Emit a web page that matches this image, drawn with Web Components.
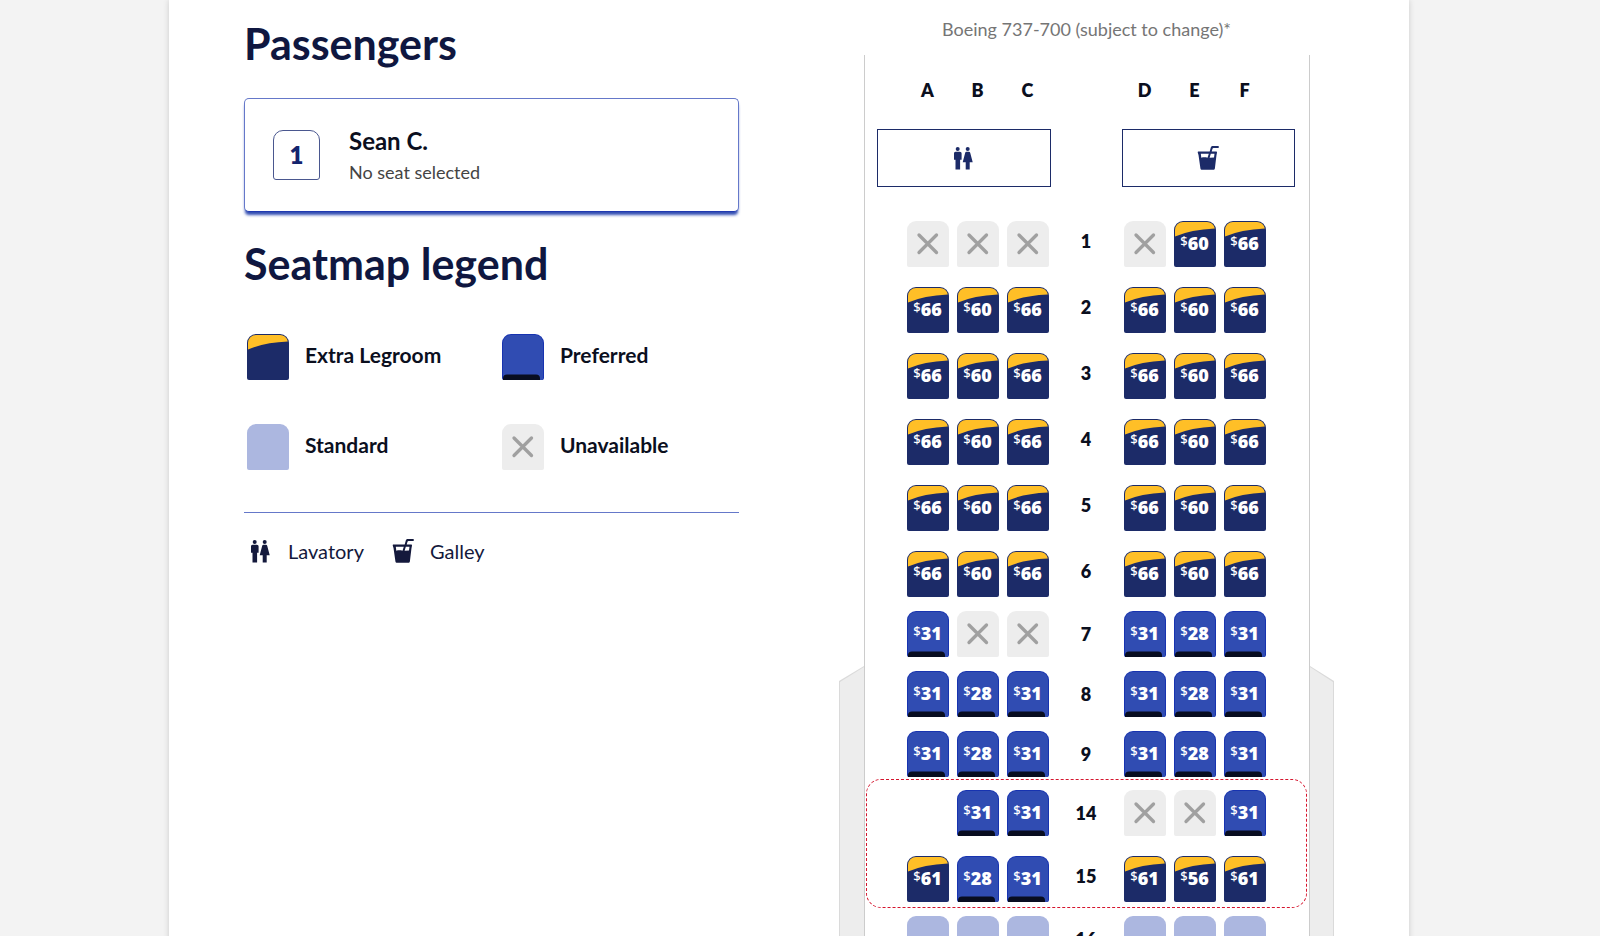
<!DOCTYPE html>
<html lang="en">
<head>
<meta charset="utf-8">
<meta name="viewport" content="width=device-width, initial-scale=1">
<title>Select your seats</title>
<style>
html { background: #f3f3f3; }
body { margin: 0; padding-right: 22px; font-family: Lato, "Noto Sans", sans-serif; color: #0b0f1e; }
</style>
</head>
<body>
<seat-page>
  <section slot="side" aria-label="Passengers and legend">
    <page-heading>Passengers</page-heading>
    <passenger-card number="1" name="Sean C.">No seat selected</passenger-card>
    <page-heading>Seatmap legend</page-heading>
    <seat-legend></seat-legend>
  </section>
  <seat-map slot="map" caption="Boeing 737-700 (subject to change)*"></seat-map>
</seat-page>
<script>
const define = (name, html, setup) => {
  const template = document.createElement('template');
  template.innerHTML = html;
  customElements.define(name, class extends HTMLElement {
    constructor() {
      super();
      this.attachShadow({ mode: 'open' });
    }
    connectedCallback() {
      if (this.shadowRoot.childNodes.length) return;
      this.shadowRoot.append(template.content.cloneNode(true));
      if (setup) setup(this, this.shadowRoot);
    }
  });
};

define('seat-page', `
<style>
:host { display: block; }
main { box-sizing: border-box; max-width: 1240px; min-height: 100vh; margin: 0 auto; padding: 16px 75px 0; background: #fff;
  box-shadow: 0 0 6px rgba(0,0,0,.16); display: grid; grid-template-columns: minmax(0,1fr) minmax(0,1fr); gap: 100px; }
</style>
<main><slot name="side"></slot><slot name="map"></slot></main>`);

define('page-heading', `
<style>
:host { display: block; }
h2 { margin: 0; padding-top: 2px; font-size: 43px; line-height: 52px; font-weight: 700; color: #0f1740; }
</style>
<h2><slot></slot></h2>`);

define('passenger-card', `
<style>
:host { display: block; margin: 28px 0 24px; }
button { box-sizing: border-box; width: 100%; height: 114px; padding: 0 28px; display: flex; align-items: center; gap: 29px;
  font: inherit; text-align: left; background: #fff; border: 1px solid #6578c9; border-bottom: 1px solid #2039b0; border-radius: 5px;
  box-shadow: 0 4px 3px -1px #304cb2; }
.badge { box-sizing: border-box; width: 47px; height: 50px; border: 1px solid #4a578f; border-radius: 10px 10px 3px 3px;
  font-size: 24px; line-height: 48px; font-weight: 800; text-align: center; color: #14246e; }
.who { padding-top: 2px; }
strong { display: block; font-size: 24px; line-height: 32px; color: #0b0f1e; }
.note { display: block; font-size: 18px; line-height: 30px; color: #444; }
</style>
<button type="button"><span class="badge"></span><span class="who"><strong></strong><span class="note"><slot></slot></span></span></button>`,
(host, root) => {
  root.querySelector('.badge').textContent = host.getAttribute('number');
  root.querySelector('strong').textContent = host.getAttribute('name');
});

const ICONS = {
  lavatory: `<circle cx="4.700" cy="4" r="2"/><path d="M2.600 6.800h4.300c1 0 1.700.7 1.700 1.700v6.200H7.100V24.500H2.500V14.700H1V8.500c0-1 .6-1.700 1.600-1.700z"/><circle cx="14.700" cy="4" r="2"/><path d="M13.400 6.800h2.600c.6 0 1 .3 1.200.9l2.500 9.500h-3v7.300h-4v-7.300H9.700l2.500-9.500c.2-.6.6-.9 1.200-.9z"/>`,
  galley: `<path fill-rule="evenodd" d="M1.500 6.500h11.200l1.100-4c.3-1 .9-1.500 1.900-1.500h6v2h-5.200c-.5 0-.8.2-1 .7l-.8 2.800h4.300c.7 0 1.100.5 1 1.200l-.5 2.300-1.600 13.200c-.1 1-.8 1.600-1.700 1.600H5.100c-.9 0-1.600-.6-1.700-1.600L1.500 10 .8 7.700c-.2-.7.1-1.200.7-1.200zM3.800 8.700l.5 4c2.200-.5 4.300-.4 6.200 0l1.300-4zM13.800 8.700l-1.200 4.100 4.400-.3.500-3.800z"/>`
};
define('facility-icon', `
<style>
:host { display: inline-block; width: 22px; height: 26px; }
svg { display: block; fill: currentColor; }
</style>
<svg width="22" height="26" viewBox="0 0 22 26" aria-hidden="true"></svg>`,
(host, root) => { root.querySelector('svg').innerHTML = ICONS[host.getAttribute('kind')]; });

const SEATS = {
  extra: `<path d="M0 11V9a9 9 0 0 1 9-9h24a9 9 0 0 1 9 9v35a2 2 0 0 1-2 2H2a2 2 0 0 1-2-2z" fill="#1c2b68"/><path d="M1 15.500V9a8 8 0 0 1 8-8h24a8 8 0 0 1 7.800 6.500Q17 8.500 1 15.500z" fill="#ffbf27"/>`,
  preferred: `<path d="M0 9a9 9 0 0 1 9-9h24a9 9 0 0 1 9 9v35a2 2 0 0 1-2 2H2a2 2 0 0 1-2-2z" fill="#1733b0"/><path d="M1 9a8 8 0 0 1 8-8h24a8 8 0 0 1 8 8v37H1z" fill="#304cb2"/><path d="M1 46v-1.500a4 4 0 0 1 4-4h29a4 4 0 0 1 4 4V46z" fill="#080d20"/>`,
  standard: `<path d="M0 9a9 9 0 0 1 9-9h24a9 9 0 0 1 9 9v35a2 2 0 0 1-2 2H2a2 2 0 0 1-2-2z" fill="#acb7e0"/>`,
  unavailable: `<path d="M0 9a9 9 0 0 1 9-9h24a9 9 0 0 1 9 9v35a2 2 0 0 1-2 2H2a2 2 0 0 1-2-2z" fill="#ededed"/><path d="M12 14l17.500 17.500M29.500 14l-17.500 17.500" stroke="#a0a0a0" stroke-width="3.300" stroke-linecap="round"/>`
};
define('seat-shape', `
<style>
:host { display: grid; width: 42px; height: 46px; }
svg, slot { grid-area: 1 / 1; }
svg { display: block; }
slot { display: flex; align-items: center; justify-content: center; }
</style>
<svg width="42" height="46" viewBox="0 0 42 46" aria-hidden="true"></svg><slot></slot>`,
(host, root) => { root.querySelector('svg').innerHTML = SEATS[host.getAttribute('kind')]; });

define('seat-legend', `
<style>
:host { display: block; }
ul { list-style: none; margin: 0; padding: 0; }
.seats { display: grid; grid-template-columns: 255px 1fr; row-gap: 44px; padding: 44px 3px 42px; border-bottom: 1px solid #6578c9; }
.seats li { display: flex; align-items: center; gap: 16px; font-size: 21px; line-height: 24px; font-weight: 700; }
.seats span { padding-bottom: 4px; }
.facilities { display: flex; gap: 28px; padding: 25px 6px; color: #14193c; }
.facilities li { display: flex; align-items: center; gap: 16px; font-size: 20px; line-height: 26px; }
</style>
<ul class="seats">
  <li><seat-shape kind="extra"></seat-shape><span>Extra Legroom</span></li>
  <li><seat-shape kind="preferred"></seat-shape><span>Preferred</span></li>
  <li><seat-shape kind="standard"></seat-shape><span>Standard</span></li>
  <li><seat-shape kind="unavailable"></seat-shape><span>Unavailable</span></li>
</ul>
<ul class="facilities">
  <li><facility-icon kind="lavatory"></facility-icon><span>Lavatory</span></li>
  <li><facility-icon kind="galley"></facility-icon><span>Galley</span></li>
</ul>`);

define('plane-seat', `
<style>
:host { display: block; }
button { display: block; margin: 0; padding: 0; border: 0; background: none; font: inherit; color: #fff; }
.price { display: flex; align-items: flex-start; font-family: "Noto Sans", Lato, sans-serif; font-size: 18px; line-height: 20px; font-weight: 900; padding-bottom: 2px; }
.price small { font-size: 13px; line-height: 16px; font-weight: 500; }
</style>
<button type="button"><seat-shape></seat-shape></button>`,
(host, root) => {
  const kind = host.getAttribute('kind');
  const price = host.getAttribute('price');
  const button = root.querySelector('button');
  button.disabled = kind === 'unavailable';
  button.setAttribute('aria-label', 'Seat ' + host.getAttribute('place') + (price ? ', $' + price : ', ' + kind));
  const shape = document.createElement('seat-shape');
  shape.setAttribute('kind', kind);
  if (price) shape.innerHTML = '<span class="price"><small>$</small>' + price + '</span>';
  button.replaceChildren(shape);
});

define('seat-row', `
<style>
:host { display: grid; grid-template-columns: 42px 42px 42px 59px 42px 42px 42px; column-gap: 8px; justify-content: center; align-items: center;
  padding: 8px 2px 6px 0; }
:host([legroom]) plane-seat { margin-top: 6px; }
.number { font-size: 18px; line-height: 24px; font-weight: 800; text-align: center; }
</style>`,
(host, root) => {
  const number = host.getAttribute('number');
  const kinds = { e: 'extra', p: 'preferred', s: 'standard', x: 'unavailable' };
  host.getAttribute('seats').split(' ').forEach((code, i) => {
    if (i === 3) {
      const label = document.createElement('div');
      label.className = 'number';
      label.textContent = number;
      root.append(label);
    }
    if (code === '-') { root.append(document.createElement('span')); return; }
    const seat = document.createElement('plane-seat');
    seat.setAttribute('kind', kinds[code[0]]);
    seat.setAttribute('place', number + 'ABCDEF'[i]);
    if (code.length > 1) seat.setAttribute('price', code.slice(1));
    root.append(seat);
  });
});

define('seat-map', `
<style>
:host { display: block; }
.caption { margin: 0 0 13px; font-size: 18px; line-height: 26px; text-align: center; color: #757575; }
.plane { display: grid; grid-template-columns: 25px minmax(0,1fr) 24px; }
.wing { margin-top: 611px; background: #dadada; clip-path: polygon(0 15px, 100% 0, 100% 100%, 0 100%); display: grid; }
.wing::before { content: ""; margin: 1px 0 0 1px; background: #ededed; clip-path: polygon(0 15px, 100% 0, 100% 100%, 0 100%); }
.wing.right { clip-path: polygon(0 0, 100% 15px, 100% 100%, 0 100%); }
.wing.right::before { margin: 1px 1px 0 0; clip-path: polygon(0 0, 100% 15px, 100% 100%, 0 100%); }
.cabin { border: solid #ccc; border-width: 0 1px; }
.letters { display: grid; grid-template-columns: 42px 42px 42px 59px 42px 42px 42px; column-gap: 8px; justify-content: center;
  padding: 23px 2px 27px 0; font-size: 18px; line-height: 24px; font-weight: 800; text-align: center; }
.letters span:nth-child(4) { grid-column: 5; }
.services { display: grid; grid-template-columns: 1fr 1fr; gap: 71px; padding: 0 14px 20px 12px; color: #1c2b68; }
.services div { box-sizing: border-box; height: 58px; border: 1px solid #1c2b68; display: grid; place-items: center; }
.exit { position: relative; margin-top: -1px; }
.exit::before { content: ""; position: absolute; inset: -3px 2px 0 1px; border: 1px dashed #d5152e; border-radius: 15px; pointer-events: none; }
</style>
<p class="caption"></p>
<div class="plane">
  <div class="wing"></div>
  <div class="cabin">
    <div class="letters"><span>A</span><span>B</span><span>C</span><span>D</span><span>E</span><span>F</span></div>
    <div class="services">
      <div role="img" aria-label="Lavatory"><facility-icon kind="lavatory"></facility-icon></div>
      <div role="img" aria-label="Galley"><facility-icon kind="galley"></facility-icon></div>
    </div>
    <seat-row legroom number="1" seats="x x x x e60 e66"></seat-row>
    <seat-row legroom number="2" seats="e66 e60 e66 e66 e60 e66"></seat-row>
    <seat-row legroom number="3" seats="e66 e60 e66 e66 e60 e66"></seat-row>
    <seat-row legroom number="4" seats="e66 e60 e66 e66 e60 e66"></seat-row>
    <seat-row legroom number="5" seats="e66 e60 e66 e66 e60 e66"></seat-row>
    <seat-row legroom number="6" seats="e66 e60 e66 e66 e60 e66"></seat-row>
    <seat-row number="7" seats="p31 x x p31 p28 p31"></seat-row>
    <seat-row number="8" seats="p31 p28 p31 p31 p28 p31"></seat-row>
    <seat-row number="9" seats="p31 p28 p31 p31 p28 p31"></seat-row>
    <div class="exit">
      <seat-row number="14" seats="- p31 p31 x x p31"></seat-row>
      <seat-row legroom number="15" seats="e61 p28 p31 e61 e56 e61"></seat-row>
    </div>
    <seat-row number="16" seats="s s s s s s"></seat-row>
  </div>
  <div class="wing right"></div>
</div>`,
(host, root) => { root.querySelector('.caption').textContent = host.getAttribute('caption'); });
</script>
</body>
</html>
